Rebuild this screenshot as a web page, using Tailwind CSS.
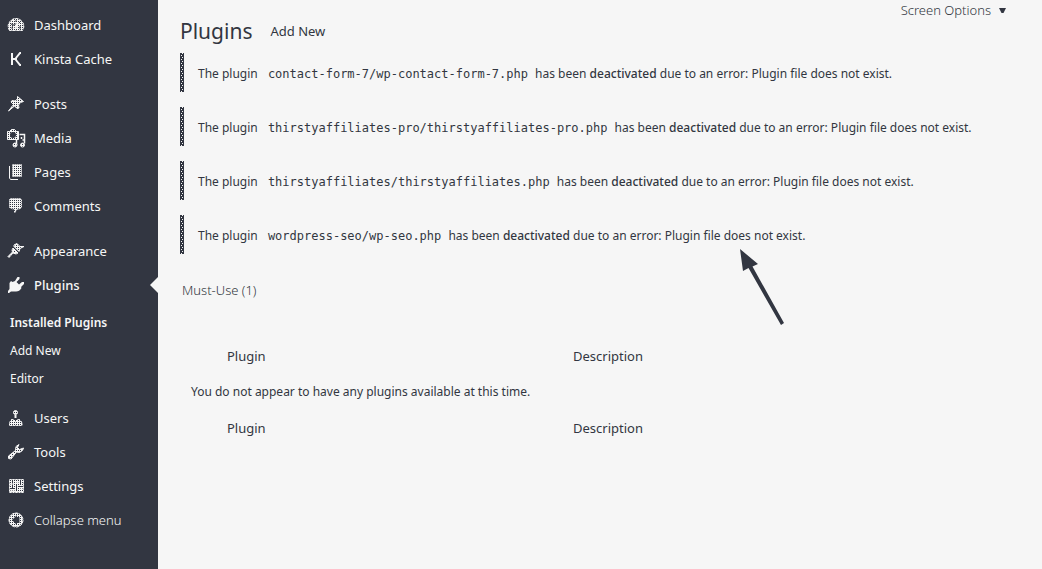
<!DOCTYPE html>
<html lang="en">
<head>
<meta charset="utf-8">
<meta name="viewport" content="width=device-width, initial-scale=1">
<title>Plugins</title>
<script src="https://cdn.jsdelivr.net/npm/@tailwindcss/browser@4"></script>
</head>
<body class="flex min-h-screen bg-[#f6f6f6] font-['Noto_Sans','Open_Sans',sans-serif] text-[13px] leading-5 text-[#323641]">
<svg class="absolute size-0" aria-hidden="true">
  <defs>
    <pattern id="mesh" width="2" height="2" patternUnits="userSpaceOnUse"><rect width="2" height="2" fill="#f6f6f6"/><rect width="1" height="1" fill="#323641"/></pattern>
    <pattern id="dots" width="4" height="4" patternUnits="userSpaceOnUse"><rect width="4" height="4" fill="#323641"/><path d="M2 0h1v1H2zM1 2h1v1H1z" fill="#f6f6f6"/></pattern>
  </defs>
</svg>
<aside class="w-[158px] shrink-0 bg-[#323641] text-[13px] text-[#f6f6f6]">
  <nav aria-label="Main menu" class="pt-2">
    <ul>
      <li><a href="#" class="flex h-[34px] items-center gap-2 pl-1.5"><svg class="size-5" viewBox="0 0 20 20" fill="none" stroke="#f6f6f6" aria-hidden="true"><path d="M3.5 15.500Q1.500 12 2.500 9Q5 3.500 10 3.500Q15 3.500 17.500 9Q18.500 12 16.500 15.500Z" fill="url(#mesh)" stroke-dasharray="3 1"/><path d="M6 14Q6 9 10 9M14 14v-3M5 9l2 1M10 5v2M13 7l1 1" stroke="#323641"/><path d="M9.500 13l2.500-6" stroke-width="2"/></svg>Dashboard</a></li>
      <li><a href="#" class="flex h-[34px] items-center gap-2 pl-1.5"><svg class="size-5" viewBox="0 0 20 20" fill="none" stroke="#f6f6f6" stroke-width="2" aria-hidden="true"><path d="M6 4v12M15 4h-1l-4 5v2l4 5h1M7 10h3"/></svg>Kinsta Cache</a></li>
      <li class="mt-[11px]"><a href="#" class="flex h-[34px] items-center gap-2 pl-1.5"><svg class="size-5" viewBox="0 0 20 20" fill="url(#mesh)" stroke="#f6f6f6" aria-hidden="true"><path d="M11.500 2.500l6 5-3 1-2 2.500.5 3-2 .5-2.500-2.500-6 5 5-6.500L5 8l1-1.500 3 .5 2.500-2z"/></svg>Posts</a></li>
      <li><a href="#" class="flex h-[34px] items-center gap-2 pl-1.5"><svg class="size-5" viewBox="0 0 20 20" fill="none" stroke="#f6f6f6" aria-hidden="true"><path d="M1.500 3.500h2l2-2h3l2 2h2v8h-11z" fill="url(#mesh)"/><circle cx="7" cy="7" r="3" fill="#323641" stroke="none"/><path d="M13.500 6.500h5v9M15.500 9v2M10.500 12v5M16.500 12h2" stroke-width="1.500"/><g fill="url(#mesh)"><circle cx="9" cy="17" r="2"/><circle cx="16.500" cy="17" r="2"/></g></svg>Media</a></li>
      <li><a href="#" class="flex h-[34px] items-center gap-2 pl-1.5"><svg class="size-5" viewBox="0 0 20 20" fill="none" stroke="#f6f6f6" aria-hidden="true"><path d="M3.500 4v12l1 1.500H12"/><path d="M6.500 2.500h9v12h-9z" fill="url(#mesh)" stroke-dasharray="1"/></svg>Pages</a></li>
      <li><a href="#" class="flex h-[34px] items-center gap-2 pl-1.5"><svg class="size-5" viewBox="0 0 20 20" fill="url(#mesh)" stroke="#f6f6f6" stroke-dasharray="1" aria-hidden="true"><path d="M4.500 2.500h10l1 1v8l-2 1.500h-2l-3 4V13h-2l-3-1.500v-8z"/></svg>Comments</a></li>
      <li class="mt-[11px]"><a href="#" class="flex h-[34px] items-center gap-2 pl-1.5"><svg class="size-5" viewBox="0 0 20 20" fill="url(#mesh)" stroke="#f6f6f6" aria-hidden="true"><path d="M8 4l3-1.500 3 3h4l-4 2-1 3-5-5z"/><path d="M7 7l5 5-2 1-3-1-4 4.500-1-1L6.500 11 6 9z"/></svg>Appearance</a></li>
      <li class="relative"><a href="#" aria-current="true" class="flex h-[34px] items-center gap-2 pl-1.5 font-medium"><svg class="size-5" viewBox="0 0 20 20" fill="#f6f6f6" aria-hidden="true"><path d="M11.500 2h2v2L10.500 7l2.500 2.500 3-2.500h2v2l-3 3 .5 1q-2 3.500-5.500 3.500h-5L3 18H2v-2l1.500-2V8L5 6l1.500 1 2.500-1z"/></svg>Plugins</a><span class="absolute right-0 top-[9px] h-4 w-2 bg-[#f6f6f6] [clip-path:polygon(100%_0,0_50%,100%_100%)]"></span>
        <ul class="mt-[7px] pb-[8px] text-[12px]">
          <li><a href="#" class="flex h-7 items-center pl-2.5 font-semibold">Installed Plugins</a></li>
          <li><a href="#" class="flex h-7 items-center pl-2.5">Add New</a></li>
          <li><a href="#" class="flex h-7 items-center pl-2.5">Editor</a></li>
        </ul></li>
      <li><a href="#" class="flex h-[34px] items-center gap-2 pl-1.5"><svg class="size-5" viewBox="0 0 20 20" fill="url(#mesh)" stroke="#f6f6f6" aria-hidden="true"><circle cx="9.500" cy="4.500" r="2"/><path d="M9.500 7v3" stroke-width="2"/><path d="M3.500 17.500v-3l2-3h2l2 2 2-2h2l2.500 3v3z" stroke-dasharray="2 1"/></svg>Users</a></li>
      <li><a href="#" class="flex h-[34px] items-center gap-2 pl-1.5"><svg class="size-5" viewBox="0 0 20 20" fill="url(#mesh)" stroke="#f6f6f6" aria-hidden="true"><path d="M13 2.500l-1.500 3 2 2 4-1.500-1 2.500-3 2-3-.5-5.500 7-2.500-.5V14L9.500 8.500l.5-4z"/></svg>Tools</a></li>
      <li><a href="#" class="flex h-[34px] items-center gap-2 pl-1.5"><svg class="size-5" viewBox="0 0 20 20" fill="none" stroke="#f6f6f6" aria-hidden="true"><path d="M3.500 3.500h14v13h-14z" fill="url(#mesh)" stroke-dasharray="2 1"/><path d="M6.500 5v7M10.500 8v7M14.500 5v4M5 12.500h4M12 10.500h4" stroke="#323641"/><path d="M4 8h3M10 7h3M4 15h5M13 13h4"/></svg>Settings</a></li>
      <li><button type="button" class="flex h-[34px] w-full items-center gap-2 pl-1.5 text-[13px] font-light"><svg class="size-5" viewBox="0 0 20 20" fill="none" stroke="#f6f6f6" aria-hidden="true"><circle cx="10" cy="10" r="7" fill="url(#mesh)" stroke-dasharray="3 1"/><path d="M13.500 7v6H11v2l-5-5 5-5v2z" fill="#323641" stroke="none"/></svg>Collapse menu</button></li>
    </ul>
  </nav>
</aside>
<main class="relative min-w-0 flex-1 pl-[22px] pr-5">
  <button type="button" class="absolute right-9 top-0 flex items-center gap-2 text-[13px] font-light">Screen Options<svg class="h-[5px] w-[7px]" viewBox="0 0 7 5" fill="#323641" aria-hidden="true"><path d="M0 0h7L4.500 5h-2z"/></svg></button>
  <div class="flex h-[53px] items-center gap-[18px] pt-2"><h1 class="text-[21px] leading-8">Plugins</h1><a href="#">Add New</a></div>
  <div class="flex flex-col gap-[15px] text-[12px]">
    <div class="flex h-[39px] items-center"><svg class="h-full w-1" aria-hidden="true"><rect width="100%" height="100%" fill="url(#dots)"/></svg><p class="pl-[14px] pt-0.5">The plugin <code class="ml-[7px] mr-1 font-['DejaVu_Sans_Mono',monospace]">contact-form-7/wp-contact-form-7.php</code> has been <strong class="font-medium">deactivated</strong> due to an error: Plugin file does not exist.</p></div>
    <div class="flex h-[39px] items-center"><svg class="h-full w-1" aria-hidden="true"><rect width="100%" height="100%" fill="url(#dots)"/></svg><p class="pl-[14px] pt-0.5">The plugin <code class="ml-[7px] mr-1 font-['DejaVu_Sans_Mono',monospace]">thirstyaffiliates-pro/thirstyaffiliates-pro.php</code> has been <strong class="font-medium">deactivated</strong> due to an error: Plugin file does not exist.</p></div>
    <div class="flex h-[39px] items-center"><svg class="h-full w-1" aria-hidden="true"><rect width="100%" height="100%" fill="url(#dots)"/></svg><p class="pl-[14px] pt-0.5">The plugin <code class="ml-[7px] mr-1 font-['DejaVu_Sans_Mono',monospace]">thirstyaffiliates/thirstyaffiliates.php</code> has been <strong class="font-medium">deactivated</strong> due to an error: Plugin file does not exist.</p></div>
    <div class="flex h-[39px] items-center"><svg class="h-full w-1" aria-hidden="true"><rect width="100%" height="100%" fill="url(#dots)"/></svg><p class="pl-[14px] pt-0.5">The plugin <code class="ml-[7px] mr-1 font-['DejaVu_Sans_Mono',monospace]">wordpress-seo/wp-seo.php</code> has been <strong class="font-medium">deactivated</strong> due to an error: Plugin file does not exist.</p></div>
  </div>
  <a href="#" class="mt-[26px] block w-fit pl-0.5 text-[13px] font-light">Must-Use (1)</a>
  <table class="mt-[38px] w-full table-fixed text-left">
    <thead><tr class="h-9 text-[13px]"><th class="w-[393px] pl-[47px] font-normal">Plugin</th><th class="font-normal">Description</th></tr></thead>
    <tbody><tr class="h-9 text-[12px]"><td colspan="2" class="pl-[11px]">You do not appear to have any plugins available at this time.</td></tr></tbody>
    <tfoot><tr class="h-9 text-[13px]"><th class="pl-[47px] font-normal">Plugin</th><th class="font-normal">Description</th></tr></tfoot>
  </table>
  <svg class="absolute left-[580px] top-[248px] h-[78px] w-[48px]" viewBox="0 0 48 78" aria-hidden="true"><path d="M2 1L20 16 14.500 18.500 46 75 43 77 10.500 20 5 23z" fill="#323641"/></svg>
</main>
</body>
</html>
